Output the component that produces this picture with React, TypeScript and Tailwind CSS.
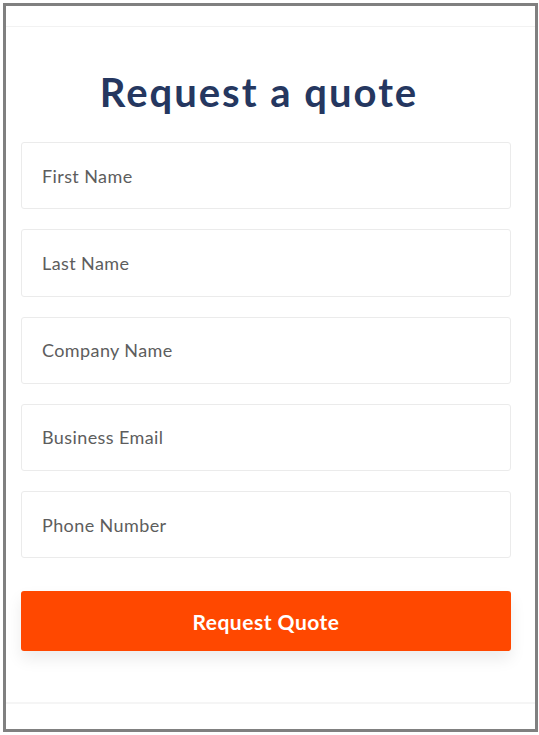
import React from "react";

const fields = ["First Name", "Last Name", "Company Name", "Business Email", "Phone Number"];

export default function App() {
  return (
    <div
      className="mt-[3px] ml-[3px] mr-[1px] h-[729px] border-[3px] border-[#808080] bg-white flex flex-col"
      style={{ fontFamily: "Lato, 'Noto Sans', sans-serif" }}
    >
      <div className="h-[21px] border-b border-[#f2f2f2]" />
      <div className="flex-1 pl-[15px] pr-[24px]">
        <h2 className="mt-[41px] mb-[26px] pr-[14px] text-center text-[40px] leading-[48px] font-bold text-[#253760] tracking-[2px]">
          Request a quote
        </h2>
        <form className="flex flex-col gap-[20px]">
          {fields.map((f) => (
            <input
              key={f}
              type="text"
              placeholder={f}
              className="h-[67.25px] w-full rounded-[3px] border border-[#ebebeb] bg-white px-[20px] text-[18px] tracking-[0.4px] text-[#5d5d5d] placeholder:text-[#5d5d5d] outline-none"
            />
          ))}
          <button
            type="button"
            className="mt-[13px] h-[60px] w-full rounded-[3px] bg-[#ff4800] text-[21px] font-bold tracking-[0.5px] text-white shadow-[0_8px_16px_rgba(0,0,0,0.08)]"
          >
            Request Quote
          </button>
        </form>
      </div>
      <div className="h-[27px] border-t-2 border-[#f5f5f5]" />
    </div>
  );
}
